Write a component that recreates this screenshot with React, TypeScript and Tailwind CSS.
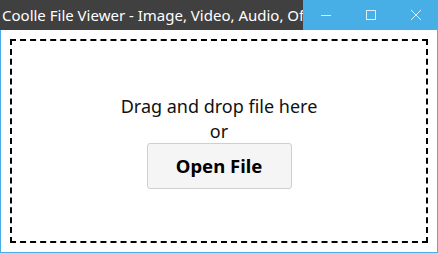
import React from 'react';

const App: React.FC = () => {
  return (
    <div className="w-[438px] h-[253px] flex flex-col bg-white overflow-hidden" style={{ fontFamily: '"Segoe UI", "Noto Sans", "Open Sans", sans-serif' }}>
      {/* Title bar */}
      <div className="h-[30px] flex shrink-0">
        <div className="flex-1 min-w-0 bg-[#404040] text-white text-[15px] leading-[30px] pl-[2px] whitespace-nowrap overflow-hidden">
          Coolle File Viewer - Image, Video, Audio, Of
        </div>
        <div className="w-[135px] bg-[#48aee6] flex text-white/80">
          <div className="w-[45px] flex items-center justify-center">
            <svg width="10" height="10" viewBox="0 0 10 10">
              <line x1="0" y1="5.5" x2="10" y2="5.5" stroke="currentColor" strokeWidth="1" />
            </svg>
          </div>
          <div className="w-[45px] flex items-center justify-center">
            <svg width="10" height="10" viewBox="0 0 10 10">
              <rect x="0.5" y="0.5" width="9" height="9" fill="none" stroke="currentColor" strokeWidth="1" />
            </svg>
          </div>
          <div className="w-[45px] flex items-center justify-center">
            <svg width="10" height="10" viewBox="0 0 10 10">
              <path d="M0 0L10 10M10 0L0 10" stroke="currentColor" strokeWidth="1" />
            </svg>
          </div>
        </div>
      </div>

      {/* Body */}
      <div className="flex-1 flex border-x border-b border-[#48aee6] p-[9px]">
        <div className="flex-1 border-2 border-dashed border-black flex flex-col items-center justify-center text-[#111]">
          <div className="text-[18px] leading-[26px]">Drag and drop file here</div>
          <div className="text-[18px] leading-[24px]">or</div>
          <button className="w-[145px] h-[46px] bg-[#f5f5f5] border border-[#cfcfcf] rounded-[3px] text-[18.5px] font-bold text-black">
            Open File
          </button>
        </div>
      </div>
    </div>
  );
};

export default App;
